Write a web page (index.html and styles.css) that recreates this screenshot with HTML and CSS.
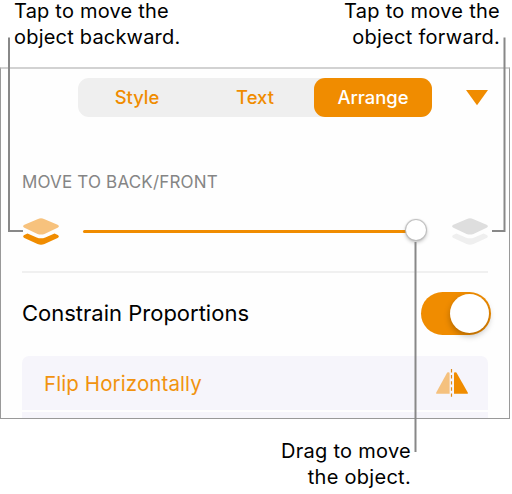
FILE: index.html
```html
<!DOCTYPE html>
<html lang="en">
<head>
<meta charset="utf-8">
<title>Arrange</title>
<link rel="stylesheet" href="styles.css">
</head>
<body>
<main class="figure">
  <header class="captions">
    <p class="caption"><span class="tight">Tap to move the</span><br><span class="tight">object backward.</span></p>
    <p class="caption end">Tap to move the<br>object forward.</p>
  </header>
  <section class="panel">
    <nav class="toolbar">
      <div class="tabs">
        <span class="tab">Style</span>
        <span class="tab">Text</span>
        <span class="tab active">Arrange</span>
      </div>
      <svg class="collapse" width="22" height="16" viewBox="0 0 22 16"><path d="M0 0H22L11 15.3Z" fill="#f08c00"/></svg>
    </nav>
    <h2 class="heading">MOVE TO BACK/FRONT</h2>
    <div class="slider-row">
      <svg class="layers back" viewBox="0 0 36 27"><path class="sheet-top" d="M15 .9Q18-.5 21 .9L34.6 6.8Q37.2 8.3 34.6 9.8L21.5 15.9Q18 17.3 14.5 15.9L1.4 9.8Q-1.2 8.3 1.4 6.8Z"/><path class="sheet-bottom" d="M4.5 15.4L13.7 19.4Q18 21.1 22.3 19.4L31.5 15.4L34.8 17Q37 18.5 34.6 20L21.5 25.9Q18 27.4 14.5 25.9L1.4 20Q-1 18.5 1.2 17Z"/></svg>
      <div class="track"><i class="thumb"></i></div>
      <svg class="layers front" viewBox="0 0 36 27"><path class="sheet-top" d="M15 .9Q18-.5 21 .9L34.6 6.8Q37.2 8.3 34.6 9.8L21.5 15.9Q18 17.3 14.5 15.9L1.4 9.8Q-1.2 8.3 1.4 6.8Z"/><path class="sheet-bottom" d="M4.5 15.4L13.7 19.4Q18 21.1 22.3 19.4L31.5 15.4L34.8 17Q37 18.5 34.6 20L21.5 25.9Q18 27.4 14.5 25.9L1.4 20Q-1 18.5 1.2 17Z"/></svg>
    </div>
    <div class="constrain">
      <span class="constrain-label">Constrain Proportions</span>
      <span class="switch"><i class="knob"></i></span>
    </div>
    <div class="list">
      <div class="item">
        <span class="item-label">Flip Horizontally</span>
        <svg width="32" height="28" viewBox="0 0 32 28"><path d="M11.2 3.6Q13.6 2.6 13.6 4.4V24.8H1Q-.4 24.8.4 23.2Z" fill="#f5c17e"/><path d="M20.4 3.6Q18 2.6 18 4.4V24.8H31Q32.4 24.8 31.6 23.2Z" fill="#f08c00"/><path d="M15.5 0V28" stroke="#e08a18" stroke-width="1.2" stroke-dasharray="3.4 2.7"/></svg>
      </div>
      <div class="item next"></div>
    </div>
  </section>
  <footer class="caption end bottom">Drag to move<br>the object.</footer>
  <svg class="callouts" width="512" height="494" viewBox="0 0 512 494"><path d="M9 37.5V231H23M504.5 37.5V231H492M415.5 242V452"/></svg>
</main>
</body>
</html>
```
FILE: styles.css
```css
* { box-sizing: border-box; }
body { margin: 0; background: #fff; color: #000; font-family: Inter, "Liberation Sans", sans-serif; }
.figure { position: relative; width: 512px; height: 494px; overflow: hidden; }
.captions { display: flex; justify-content: space-between; height: 67px; padding: 0 12px 0 14px; }
.caption { margin: 0; font-size: 20px; line-height: 26px; white-space: nowrap; letter-spacing: .28px; }
.captions .caption { margin-top: -2px; }
.tight { letter-spacing: .2px; }
.end { text-align: right; }
.panel { width: 510px; height: 352px; padding: 9px 17px 0 21px; background: #fefefe; border: 1px solid #999; border-top: 2px solid #d2d2d2; overflow: hidden; }
.toolbar { display: flex; align-items: center; height: 39px; margin-left: 56px; }
.tabs { display: flex; width: 354px; height: 39px; border-radius: 11px; background: #efefef; }
.tab { flex: none; width: 118px; color: #f08c00; font-size: 18.4px; font-weight: 500; line-height: 39px; text-align: center; }
.active { border-radius: 11px; background: #f08c00; color: #fff; }
.collapse { margin: 0 0 0 34px; }
.heading { height: 24px; margin: 53px 0 0; color: #858585; font-size: 17px; font-weight: 400; line-height: 24px; white-space: nowrap; letter-spacing: .17px; }
.slider-row { display: flex; align-items: center; height: 79px; padding-bottom: 2px; border-bottom: 2px solid #f0f0f0; width: 466px; }
.layers { flex: none; width: 36px; height: 27px; margin-top: -1px; }
.back { margin-left: 1px; }
.back .sheet-top { fill: #f7c27d; }
.back .sheet-bottom { fill: #f08c00; }
.front .sheet-top { fill: #dedede; }
.front .sheet-bottom { fill: #efefef; }
.track { position: relative; flex: none; width: 333px; height: 3px; margin: 0 36px 0 24px; background: #f08c00; border-radius: 2px; }
.thumb { position: absolute; right: -10px; top: -10px; width: 20px; height: 20px; border-radius: 50%; background: #fff; box-shadow: 0 0 1px 1px #bbb, 0 2px 4px #0005; }
.constrain { display: flex; justify-content: space-between; align-items: center; height: 83px; width: 469px; padding-bottom: 3px; }
.constrain-label { font-size: 22px; }
.switch { display: flex; justify-content: flex-end; width: 70px; height: 43px; padding: 2px; border-radius: 22px; background: #f08c00; }
.knob { width: 39px; height: 39px; border-radius: 50%; background: #fff; box-shadow: 0 3px 6px #0004; }
.list { width: 466px; height: 70px; border-radius: 7px 7px 0 0; background: #f6f5fb; overflow: hidden; }
.item { display: flex; align-items: center; justify-content: space-between; height: 54px; padding: 0 20px 0 22px; }
.item-label { color: #f1930f; font-size: 20.5px; letter-spacing: .1px; }
.next { border-top: 2px solid #fefefe; }
.bottom { padding: 19px 101px 0 0; }
.callouts { position: absolute; left: 0; top: 0; fill: none; stroke: #888; stroke-width: 2; }
```
